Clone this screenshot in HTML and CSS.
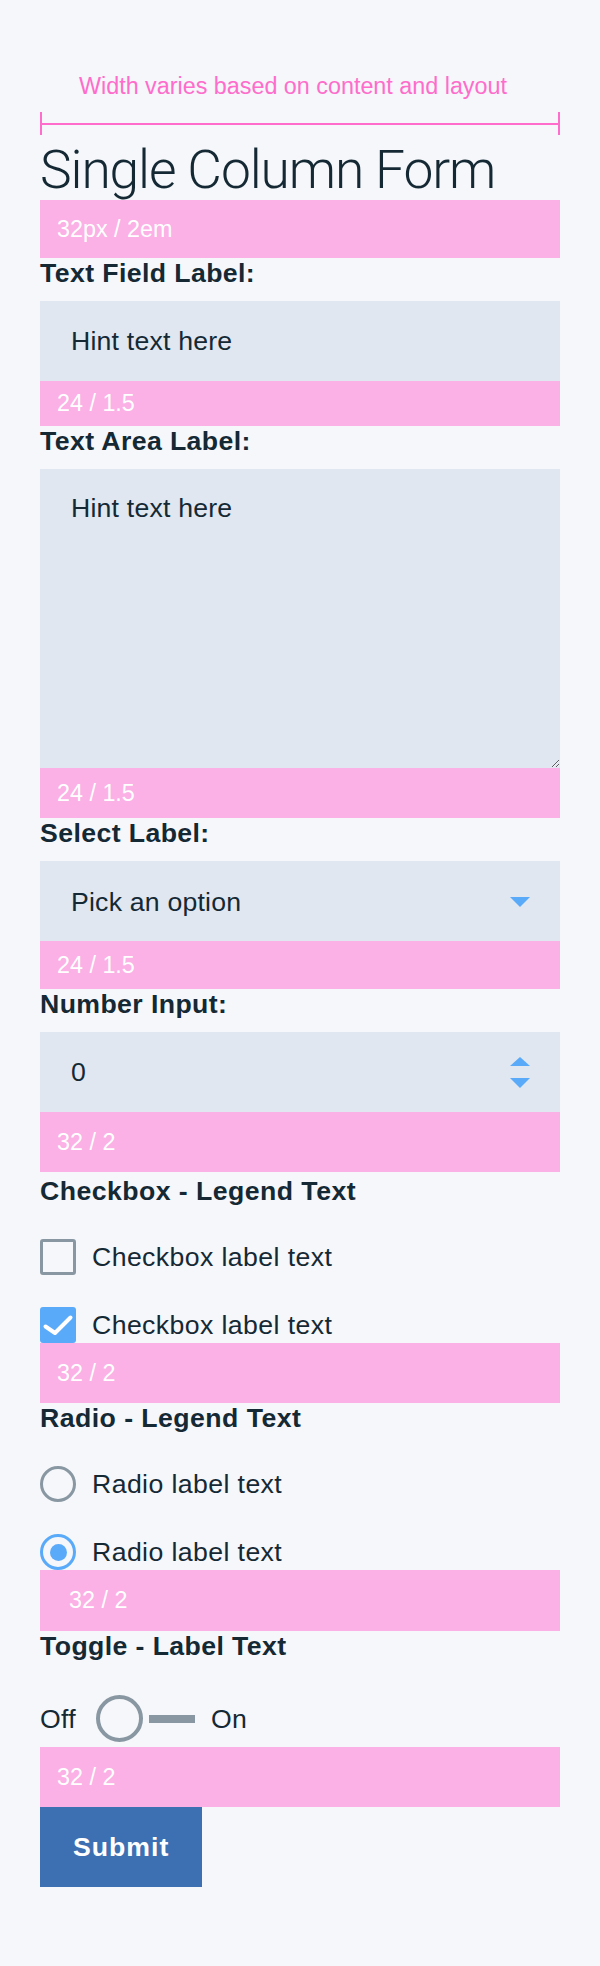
FILE: index.html
```html
<!DOCTYPE html>
<html lang="en">
<head>
<meta charset="utf-8">
<title>Single Column Form</title>
<link rel="stylesheet" href="styles.css">
</head>
<body>
<main class="page">
  <p class="note">Width varies based on content and layout</p>
  <div class="dim"><span class="dim-line"></span></div>
  <h1 class="title">Single Column Form</h1>
  <div class="spec spec-h1">32px / 2em</div>

  <form class="form" onsubmit="return false">
    <label class="label" for="tf">Text Field Label:</label>
    <input class="field" id="tf" type="text" placeholder="Hint text here">
    <div class="spec spec-a">24 / 1.5</div>

    <label class="label" for="ta">Text Area Label:</label>
    <textarea class="field area" id="ta" placeholder="Hint text here"></textarea>
    <div class="spec spec-b">24 / 1.5</div>

    <label class="label" for="sel">Select Label:</label>
    <div class="control">
      <select class="field select" id="sel">
        <option>Pick an option</option>
      </select>
      <svg class="caret" width="20" height="10" viewBox="0 0 20 10"><path d="M0 0h20L10 10z" fill="#5aaafa"/></svg>
    </div>
    <div class="spec spec-c">24 / 1.5</div>

    <label class="label" for="num">Number Input:</label>
    <div class="control">
      <input class="field number" id="num" type="number" value="0">
      <svg class="spinner" width="20" height="31" viewBox="0 0 20 31"><path d="M0 9L10 0l10 9z" fill="#5aaafa"/><path d="M0 21h20L10 31z" fill="#5aaafa"/></svg>
    </div>
    <div class="spec spec-d">32 / 2</div>

    <fieldset class="group group-check">
      <legend class="legend">Checkbox - Legend Text</legend>
      <div class="choice">
        <span class="box"></span>
        <span>Checkbox label text</span>
      </div>
      <div class="choice">
        <span class="box box-on">
          <svg width="36" height="36" viewBox="0 0 36 36"><path d="M5.5 19.5l9.5 6.5 15.5-15.5" fill="none" stroke="#fff" stroke-width="4" stroke-linecap="round" stroke-linejoin="round"/></svg>
        </span>
        <span>Checkbox label text</span>
      </div>
    </fieldset>
    <div class="spec spec-e">32 / 2</div>

    <fieldset class="group">
      <legend class="legend">Radio - Legend Text</legend>
      <div class="choice">
        <span class="radio"></span>
        <span>Radio label text</span>
      </div>
      <div class="choice">
        <span class="radio radio-on"><span class="dot"></span></span>
        <span>Radio label text</span>
      </div>
    </fieldset>
    <div class="spec spec-f">32 / 2</div>

    <p class="label toggle-label">Toggle - Label Text</p>
    <div class="toggle">
      <span>Off</span>
      <span class="knob"></span>
      <span class="track"></span>
      <span class="on">On</span>
    </div>
    <div class="spec spec-g">32 / 2</div>

    <button class="submit" type="submit">Submit</button>
  </form>
</main>
</body>
</html>
```

FILE: styles.css
```css
* {
  box-sizing: border-box;
}

html,
body {
  margin: 0;
}

body {
  background: #f5f7fa;
  color: #152935;
  font-family: "Liberation Sans", Arial, sans-serif;
  font-size: 26.67px;
  letter-spacing: 0.3px;
}

.page {
  padding: 73px 40px 79px;
}

.note {
  margin: 0 0 0 39px;
  font-size: 23.33px;
  line-height: 27px;
  letter-spacing: 0;
  color: #ff6ccb;
}

.dim {
  margin-top: 12px;
  height: 23px;
  border-left: 2px solid #ff6ccb;
  border-right: 2px solid #ff6ccb;
  display: flex;
  align-items: center;
}

.dim-line {
  flex: 1;
  height: 2px;
  background: #ff6ccb;
}

.title {
  margin: 5px 0 0;
  font-family: Roboto, "Liberation Sans", sans-serif;
  font-weight: 300;
  font-size: 53.33px;
  line-height: 60px;
  letter-spacing: -1.1px;
  color: #152935;
}

.spec {
  display: flex;
  align-items: center;
  padding-left: 17px;
  background: #fbb1e5;
  color: #fff;
  font-size: 23.33px;
  line-height: 27px;
  letter-spacing: 0;
}

.spec-h1 { height: 58px; }
.spec-a { height: 45px; }
.spec-b { height: 50px; }
.spec-c { height: 48px; }
.spec-d { height: 60px; }
.spec-e { height: 60px; }
.spec-f { height: 61px; padding-left: 29px; }
.spec-g { height: 60px; margin-top: 5px; }

.form {
  margin: 0;
}

.label {
  display: block;
  margin: 0 0 13px;
  font-weight: 700;
  line-height: 30px;
  letter-spacing: 0.4px;
}

.field {
  display: block;
  width: 100%;
  height: 80px;
  margin: 0;
  padding: 0 31px;
  border: 0;
  border-radius: 0;
  background: #e0e7f1;
  color: #152935;
  font-family: inherit;
  font-size: 26.67px;
  letter-spacing: 0.2px;
  outline: none;
}

.field::placeholder {
  color: #152935;
  opacity: 1;
}

.area {
  height: 299px;
  padding: 19px 31px;
  line-height: 40px;
  resize: vertical;
}

.control {
  position: relative;
}

.select {
  -webkit-appearance: none;
  appearance: none;
  padding-top: 2px;
}

.number {
  -moz-appearance: textfield;
}

.number::-webkit-inner-spin-button,
.number::-webkit-outer-spin-button {
  -webkit-appearance: none;
  margin: 0;
}

.caret {
  position: absolute;
  right: 30px;
  top: 36px;
  pointer-events: none;
}

.spinner {
  position: absolute;
  right: 30px;
  top: 25px;
  pointer-events: none;
}

.group {
  margin: 4px 0 0;
  padding: 0;
  border: 0;
  min-width: 0;
}

.group + .spec + .group {
  margin-top: 0;
}

.legend {
  padding: 0;
  font-weight: 700;
  line-height: 31px;
  letter-spacing: 0.45px;
}

.choice {
  display: flex;
  align-items: center;
  gap: 16px;
  margin-top: 32px;
  line-height: 30px;
  letter-spacing: 0.4px;
}

.box {
  flex: none;
  width: 36px;
  height: 36px;
  border: 3px solid #8897a2;
  border-radius: 3px;
}

.box-on {
  border: 0;
  background: #5aaafa;
}

.box-on svg {
  display: block;
}

.radio {
  flex: none;
  display: flex;
  align-items: center;
  justify-content: center;
  width: 36px;
  height: 36px;
  border: 3.5px solid #8897a2;
  border-radius: 50%;
}

.radio-on {
  border-color: #5aaafa;
}

.dot {
  width: 17px;
  height: 17px;
  border-radius: 50%;
  background: #5aaafa;
}

.toggle-label {
  margin: 0;
}

.toggle {
  display: flex;
  align-items: center;
  margin-top: 34px;
  line-height: 30px;
}

.knob {
  flex: none;
  width: 47px;
  height: 47px;
  margin-left: 20px;
  border: 4px solid #8897a2;
  border-radius: 50%;
}

.track {
  flex: none;
  width: 46px;
  height: 8px;
  margin-left: 6px;
  background: #8897a2;
}

.on {
  margin-left: 16px;
}

.submit {
  display: block;
  height: 80px;
  margin: 0;
  padding: 0 33px;
  border: 0;
  border-radius: 0;
  background: #3d70b2;
  color: #fff;
  font-family: inherit;
  font-size: 26.67px;
  font-weight: 700;
  letter-spacing: 1px;
}
```
